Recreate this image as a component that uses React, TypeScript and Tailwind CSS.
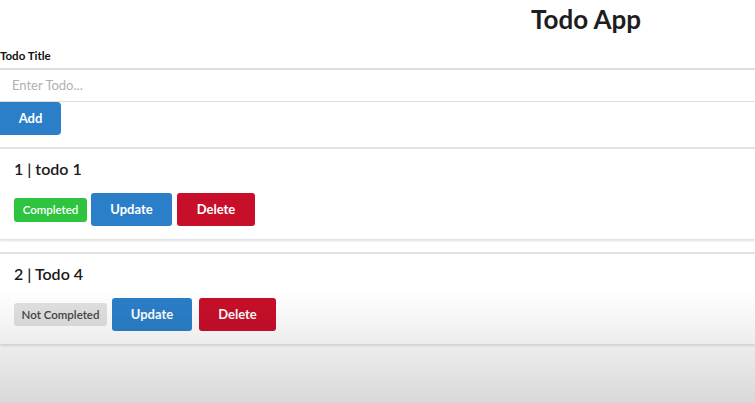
import React from "react";

const todos = [
  { id: 1, title: "todo 1", done: true },
  { id: 2, title: "Todo 4", done: false },
];

export default function App() {
  return (
    <div className="relative w-[755px] h-[403px] overflow-hidden bg-white text-[#222]" style={{ fontFamily: "Lato, 'Open Sans', sans-serif" }}>
      <h1 className="pl-[531px] pt-[2px] text-[26px] font-bold leading-[34px] text-[#1e1e1e]">Todo App</h1>
      <div className="mt-[13px]">
        <label className="block text-[11.5px] font-bold leading-[14px] text-[#111]">Todo Title</label>
        <div className="mt-[5px] h-[34px] border-t-2 border-b border-[#dedede] flex items-center pl-[12px] text-[13px] text-[#b0b0b0]">
          Enter Todo...
        </div>
        <button className="w-[61px] h-[33px] bg-[#2a7fc8] text-white text-[13px] font-bold rounded-r-[4px] rounded-l-none">Add</button>
      </div>
      <div className="mt-[12px] flex flex-col gap-[13px]">
        {todos.map((t) => (
          <div key={t.id} className="border-t-2 border-[#e2e2e2] shadow-[0_2px_2px_rgba(0,0,0,0.12)] pl-[14px] pt-[9px] pb-[13px]">
            <div className="text-[16px] font-semibold leading-[22px] text-[#1a1a1a]">{t.id} | {t.title}</div>
            <div className={`mt-[13px] flex items-center ${t.done ? "gap-[4px]" : "gap-[5px]"}`}>
              {t.done ? (
                <span className="w-[73px] h-[24px] flex items-center justify-center rounded-[3px] bg-[#2ec440] text-white text-[11.5px] font-semibold">Completed</span>
              ) : (
                <span className="w-[93px] h-[23px] flex items-center justify-center rounded-[3px] bg-[#e1e1e1] text-[#444] text-[11.5px] font-semibold">Not Completed</span>
              )}
              <button className={`${t.done ? "w-[81px]" : "w-[80px]"} h-[33px] rounded-[3px] bg-[#2a7fc8] text-white text-[13px] font-bold`}>Update</button>
              <button className={`${t.done ? "w-[78px] ml-[1px]" : "w-[77px] ml-[2px]"} h-[33px] rounded-[3px] bg-[#c70f2a] text-white text-[13px] font-bold`}>Delete</button>
            </div>
          </div>
        ))}
      </div>
      <div className="pointer-events-none absolute left-0 right-0 top-[290px] bottom-0 bg-gradient-to-b from-transparent to-black/15" />
    </div>
  );
}
